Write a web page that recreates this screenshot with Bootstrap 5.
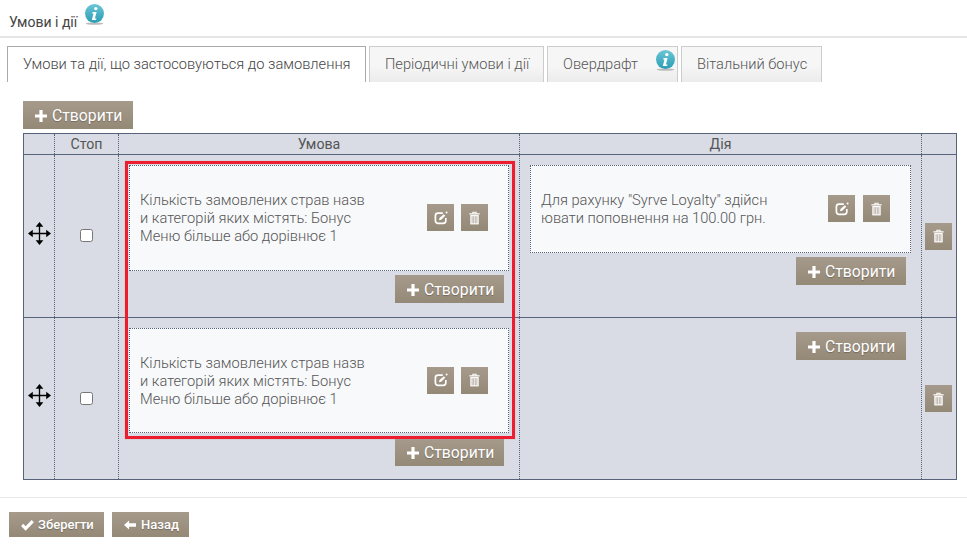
<!DOCTYPE html>
<html lang="uk">
<head>
<meta charset="utf-8">
<title>Умови і дії</title>
<link href="https://cdn.jsdelivr.net/npm/bootstrap@5.3.0/dist/css/bootstrap.min.css" rel="stylesheet">
<style>
html,body{height:100%}
body{font-family:Roboto,"Liberation Sans",sans-serif;font-weight:300;font-size:14px;color:#555;background:#fff;overflow:hidden;position:relative}
.pg-head{height:38px;border-bottom:2px solid #e5e5e5;padding:13px 0 0 9px;position:relative}
.pg-head h1{font-size:14px;font-weight:400;color:#444;margin:0;line-height:18px}
.info-ic{position:absolute;display:block;width:21px;height:21px}
.pg-head .info-ic{left:84px;top:4px}
.tabs-row{display:flex;gap:3px;padding:8px 0 0 7px;height:44px;align-items:stretch}
.tab-it{border:1px solid #ccc;border-bottom:0;padding:0 15px;line-height:34px;font-size:14.65px;color:#555;background:linear-gradient(#f6f6f6 0,#f6f6f6 55%,#ebebeb 100%);position:relative;white-space:nowrap}
.tab-it.on{background:#fff;border-color:#aaa;color:#444;width:359px}
.tab-it .info-ic{left:107px;top:3px}
.tab-w3{width:131px}
.tab-w2{width:175px}
.tab-w4{width:141px}
.zone{padding:19px 11px 0 23px;position:relative}
.act-btn{display:inline-flex;align-items:center;justify-content:center;background:linear-gradient(#a69a8c,#948876);color:#fff;border:0;border-radius:0;font-family:inherit;padding:0;text-shadow:0 1px 1px rgba(0,0,0,.25)}
.act-add{width:110px;height:28px;font-size:15.75px;font-weight:400;gap:5px;justify-content:flex-start;padding:2px 0 0 12px}
.act-add-n{width:109px}
.act-sq{width:27px;height:27px}
.rule-tbl{border-collapse:collapse;table-layout:fixed;width:933px;margin-top:4px;background:#d9dce4}
.rule-tbl th,.rule-tbl td{border:1px dotted #56637a;padding:0;vertical-align:top}
.rule-tbl thead th{border-top:1px solid #56637a;border-bottom:1px solid #56637a;height:21px;font-weight:400;font-size:14.2px;text-align:center;line-height:20px;color:#555}
.rule-tbl tr > :first-child{border-left:1px solid #56637a}
.rule-tbl tr > :last-child{border-right:1px solid #56637a}
.rule-tbl tbody tr{border-bottom:1px solid #56637a}
.rule-tbl tbody td{border-bottom:1px solid #56637a}
.row-a{height:163px}
.row-b{height:162px}
.mid{vertical-align:middle!important;text-align:center}
.cond-box{background:#f8f9fb;border:1px dotted #56637a;display:flex;align-items:center;justify-content:space-between;margin:10px 10px 0 10px;font-size:14.65px;line-height:18px;color:#555}
.cond-txt{white-space:nowrap}
.cond-ops{display:flex;gap:7px;margin-top:-1px}
.cond-a{height:106px;padding:0 20px 0 10px}
.row-b .cond-a{height:105px}
.row-b .add-c{margin-top:5px}
.row-b .chk{top:2px}
.act-a{height:88px;padding:0 20px 0 10px}
.act-a .cond-ops{gap:8px}
.add-line{display:flex;justify-content:flex-end;margin:4px 15px 0 0}
.add-top{margin-top:14px}
.chk{width:13px;height:13px;margin:0;position:relative;top:1px;appearance:none;border:1px solid #767676;border-radius:2.5px;background:#fff;display:inline-block}
.mv-ic{display:block;margin:-6px 0 0 4px}
.del-row{margin-right:2px}
.mark-red{position:absolute;left:125px;top:161px;width:390px;height:278px;border:3px solid #ed1c2e;box-shadow:0 0 1px #b5a8a8;pointer-events:none}
.foot-sep{position:absolute;left:0;right:0;top:497px;border-top:1px solid #eaeaea}
.foot-btns{position:absolute;left:9px;top:512px;display:flex;gap:8px}
.act-foot{height:25px;font-size:13px;font-weight:500;gap:4px;justify-content:flex-start;padding:1px 0 0 12px}
.w-save{width:95px}.w-back{width:77px;gap:5px}
</style>
</head>
<body>
<svg width="0" height="0" class="position-absolute">
<defs>
<linearGradient id="ibg" x1="0" y1="0" x2="0" y2="1"><stop offset="0" stop-color="#6cc6d6"/><stop offset="1" stop-color="#2a9db5"/></linearGradient>
<symbol id="i-info" viewBox="0 0 21 21">
<ellipse cx="10.5" cy="19.6" rx="9" ry="1.2" fill="#bbb"/>
<circle cx="10.5" cy="9.5" r="9.5" fill="url(#ibg)"/>
<circle cx="11.8" cy="4.6" r="1.7" fill="#fff"/>
<path d="M8.6 8h4l-1.7 6.6h1.6l-.5 1.4H7.8l1.7-6.6H8.2z" fill="#fff"/>
</symbol>
<symbol id="i-plus" viewBox="0 0 12 12"><path d="M4.4 0h3.2v4.400H12v3.200H7.600V12H4.400V7.600H0V4.400h4.400z" fill="#fff"/></symbol>
<symbol id="i-edit" viewBox="0 0 14 14"><path d="M8.800 2.200H4a2.600 2.600 0 0 0-2.600 2.600v5A2.600 2.600 0 0 0 4 12.400h5.200a2.600 2.600 0 0 0 2.600-2.600V7" fill="none" stroke="#fff" stroke-width="1.700"/><path d="M5 9.300l.5-2.200 4.300-3.900 1.500 1.500-4.100 4.100z" fill="#fff"/><circle cx="12.600" cy="1.600" r="1" fill="#fff"/></symbol>
<symbol id="i-trash" viewBox="0 0 12 14"><path d="M4.200 2V.6h3.600V2M.4 2.500h11.200" fill="none" stroke="#fff" stroke-width="1.100"/><path d="M1.400 3.800h9.200V14H1.400z" fill="#fff"/><path d="M3.400 5v7.800M5.100 5v7.800M6.900 5v7.800M8.600 5v7.800" stroke="#a2968a" stroke-width=".8"/></symbol>
<symbol id="i-move" viewBox="0 0 24 24"><path d="M12 0l4 5H8zM12 24l-4-5h8zM0 12l5-4v8zM24 12l-5 4V8z" fill="#000"/><path d="M12 4v16M4 12h16" stroke="#000" stroke-width="1.400"/></symbol>
<symbol id="i-check" viewBox="0 0 14 12"><path d="M0 6.500l2.400-2.300 2.600 2.600L11.500 0 14 2.400 5 11.600z" fill="#fff"/></symbol>
<symbol id="i-back" viewBox="0 0 13 10"><path d="M0 5l5.500-5v3H13v4H5.500v3z" fill="#fff"/></symbol>
</defs>
</svg>

<header class="pg-head">
<h1>Умови і дії</h1>
<svg class="info-ic"><use href="#i-info"/></svg>
</header>

<nav class="tabs-row">
<div class="tab-it on">Умови та дії, що застосовуються до замовлення</div>
<div class="tab-it tab-w2">Періодичні умови і дії</div>
<div class="tab-it tab-w3">Овердрафт<svg class="info-ic"><use href="#i-info"/></svg></div>
<div class="tab-it tab-w4">Вітальний бонус</div>
</nav>

<main class="zone">
<button type="button" class="act-btn act-add"><svg width="12" height="12"><use href="#i-plus"/></svg>Створити</button>
<table class="rule-tbl">
<colgroup><col style="width:31px"><col style="width:64px"><col style="width:401px"><col style="width:402px"><col style="width:35px"></colgroup>
<thead><tr><th></th><th>Стоп</th><th>Умова</th><th>Дія</th><th></th></tr></thead>
<tbody>
<tr class="row-a">
<td class="mid"><svg class="mv-ic" width="23" height="23"><use href="#i-move"/></svg></td>
<td class="mid"><input type="checkbox" class="chk" aria-label="Стоп"></td>
<td>
<div class="cond-box cond-a"><div class="cond-txt">Кількість замовлених страв назв<br>и категорій яких містять: Бонус<br>Меню більше або дорівнює 1</div>
<div class="cond-ops"><button type="button" class="act-btn act-sq"><svg width="14" height="14"><use href="#i-edit"/></svg></button><button type="button" class="act-btn act-sq"><svg width="11" height="14"><use href="#i-trash"/></svg></button></div></div>
<div class="add-line add-c"><button type="button" class="act-btn act-add act-add-n"><svg width="12" height="12"><use href="#i-plus"/></svg>Створити</button></div>
</td>
<td>
<div class="cond-box act-a"><div class="cond-txt">Для рахунку "Syrve Loyalty" здійсн<br>ювати поповнення на 100.00 грн.</div>
<div class="cond-ops"><button type="button" class="act-btn act-sq"><svg width="14" height="14"><use href="#i-edit"/></svg></button><button type="button" class="act-btn act-sq"><svg width="11" height="14"><use href="#i-trash"/></svg></button></div></div>
<div class="add-line"><button type="button" class="act-btn act-add"><svg width="12" height="12"><use href="#i-plus"/></svg>Створити</button></div>
</td>
<td class="mid"><button type="button" class="act-btn act-sq del-row"><svg width="11" height="14"><use href="#i-trash"/></svg></button></td>
</tr>
<tr class="row-b">
<td class="mid"><svg class="mv-ic" width="23" height="23"><use href="#i-move"/></svg></td>
<td class="mid"><input type="checkbox" class="chk" aria-label="Стоп"></td>
<td>
<div class="cond-box cond-a"><div class="cond-txt">Кількість замовлених страв назв<br>и категорій яких містять: Бонус<br>Меню більше або дорівнює 1</div>
<div class="cond-ops"><button type="button" class="act-btn act-sq"><svg width="14" height="14"><use href="#i-edit"/></svg></button><button type="button" class="act-btn act-sq"><svg width="11" height="14"><use href="#i-trash"/></svg></button></div></div>
<div class="add-line add-c"><button type="button" class="act-btn act-add act-add-n"><svg width="12" height="12"><use href="#i-plus"/></svg>Створити</button></div>
</td>
<td><div class="add-line add-top"><button type="button" class="act-btn act-add"><svg width="12" height="12"><use href="#i-plus"/></svg>Створити</button></div></td>
<td class="mid"><button type="button" class="act-btn act-sq del-row"><svg width="11" height="14"><use href="#i-trash"/></svg></button></td>
</tr>
</tbody>
</table>
</main>
<div class="mark-red"></div>
<div class="foot-sep"></div>
<div class="foot-btns">
<button type="button" class="act-btn act-foot w-save"><svg width="13" height="11"><use href="#i-check"/></svg>Зберегти</button>
<button type="button" class="act-btn act-foot w-back"><svg width="12" height="10"><use href="#i-back"/></svg>Назад</button>
</div>
<script src="https://cdn.jsdelivr.net/npm/bootstrap@5.3.0/dist/js/bootstrap.bundle.min.js"></script>
</body>
</html>
